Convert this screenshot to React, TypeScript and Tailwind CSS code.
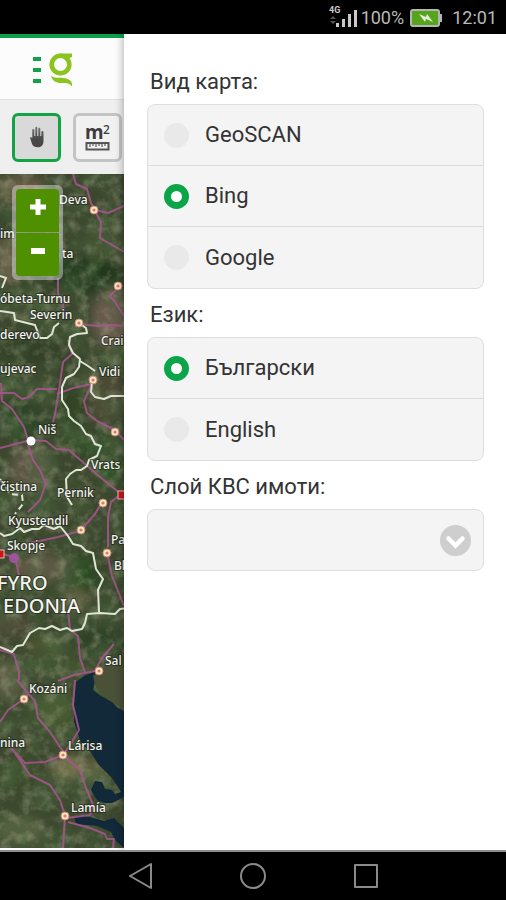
import React, { useState } from 'react';

interface MapLabel {
  text: string;
  x: number;
  y: number;
  size?: number;
}

const borders = [
  'M0 276l6 2-4 10M0 311l14 2 1 7 20 5 5 13 7 0 5-4 2-7 5-4',
  'M79 323l7 5 1 5-10 1-7 3-1 8 4 8 7 6-1 8-5 7-8 4-4 9 0 13 6 9 1 7 5 5 7 5 5 8 5 2 4 8 6 2-4 10-8 4-2 6-6 4-5 0-6 4-4 5 1 18 5 8',
  'M80 361l8 5 7 5M92 382l-1 10 4 5 9 2 7-3 13 0',
  'M0 533l4 3 8-2 8-6 4 4 8-3 7 0 5-4 10 4 6-3 8 10 5 8 8 2 5 5 7 2 3 16 7 10-5 11 1 22',
  'M0 647l12 5 5-6 6-1 7-12 9-5 6 1 7-3 8 4 7-2 5 3 10-2 3-6 2-9 13-1 15 1 5-5 7-1',
];

const roads = [
  'M73 174l3 10 11 5 4 14 4 7 13 3 16-7M95 211l6 11-1 16 24 14',
  'M58 278l0 16 5 10 1 14M79 324l18 2 13-1 14 1M118 288l-8 8 5 6 9 14',
  'M68 340l4 14-9 8-4 28-4 24-2 8',
  'M0 393l14 0 8 6 7-2 8-8 20 0M57 394l16-6 19-4-8 17 3 12 10 8 18 9 9 10',
  'M1 383l1 18 10 8 12 18 4 13 3 1M0 448l31-8 15 1 10 8 13 1 16 14 15 13 21 17',
  'M28 445l5 15 7 10 6 14-6 16-12 12M121 494l-10 8-3 15 0 30M102 502l-7 12-15 17-22 6-28 6',
  'M2 554l13 3 4 18M107 552l5 24 12 30M68 610l2 20 8 6 2 22 5 14',
  'M58 681l16-6 21-4 7-13 12-14M0 650l14 4 5 18 0 8',
  'M0 722l8-12 16-11 8-9M17 680l10 12 8 9 3 17 12 14 12 18 2 5',
  'M11 748l14 15 20-1 18-7M13 750l17 25 20 10 10 15 5 16-2 32',
  'M75 680l-2 25 6 25-9 15-7 10 17 15 6 18 7 17-3 10-23 3M68 822l22 6 15 6 2 5 7 0-1 9',
];

const towns = [
  [94, 210], [118, 286], [79, 323], [93, 380], [115, 432], [103, 503],
  [81, 530], [107, 553], [99, 671], [24, 699], [63, 755], [65, 816],
];

const labels: MapLabel[] = [
  { text: 'Deva', x: 59, y: 204 },
  { text: 'im', x: 0, y: 238 },
  { text: 'ta', x: 62, y: 258 },
  { text: 'óbeta-Turnu', x: 0, y: 303 },
  { text: 'Severin', x: 30, y: 319 },
  { text: 'derevo', x: 0, y: 339 },
  { text: 'Crai', x: 101, y: 345 },
  { text: 'ujevac', x: 0, y: 373 },
  { text: 'Vidi', x: 99, y: 376 },
  { text: 'Niš', x: 38, y: 434 },
  { text: 'Vrats', x: 91, y: 469 },
  { text: 'čistina', x: 0, y: 491 },
  { text: 'Pernik', x: 57, y: 497 },
  { text: 'Kyustendil', x: 8, y: 525 },
  { text: 'Skopje', x: 7, y: 550 },
  { text: 'Pa', x: 111, y: 544 },
  { text: 'Bl', x: 114, y: 570 },
  { text: 'FYRO', x: -3, y: 590, size: 20 },
  { text: 'EDONIA', x: 3, y: 613, size: 20 },
  { text: 'Sal', x: 105, y: 665 },
  { text: 'Kozáni', x: 29, y: 693 },
  { text: 'nina', x: 0, y: 747 },
  { text: 'Lárisa', x: 68, y: 750 },
  { text: 'Lamía', x: 71, y: 812 },
];

const patches = [
  [20, 190, 26, 14, '#6b5a45'], [8, 260, 12, 24, '#6a6048'], [105, 240, 18, 22, '#435033'],
  [85, 275, 36, 18, '#22371c'], [112, 320, 20, 30, '#665a4b'], [40, 350, 40, 14, '#333f25'],
  [100, 395, 26, 26, '#4b4c36'], [20, 420, 24, 20, '#2d4425'], [70, 410, 18, 32, '#304426'],
  [30, 470, 20, 24, '#5d5944'], [90, 445, 20, 12, '#26401f'], [112, 470, 14, 10, '#2f5427'],
  [40, 568, 28, 14, '#5f5844'], [85, 575, 14, 18, '#2a4820'], [75, 600, 14, 10, '#6a6046'],
  [12, 625, 22, 10, '#4e4a34'], [45, 645, 20, 8, '#4b5633'], [95, 640, 22, 14, '#2e4325'],
  [60, 668, 26, 14, '#425532'], [8, 680, 16, 20, '#5e5842'], [55, 710, 18, 20, '#47592f'],
  [20, 775, 18, 24, '#3a482a'], [70, 768, 20, 12, '#75704e'], [40, 800, 26, 14, '#3b4a2d'],
  [20, 830, 26, 14, '#546040'], [95, 770, 14, 12, '#5f6141'],
] as const;

const MapView = () => (
  <svg
    className="absolute inset-0 h-full w-full"
    viewBox="0 174 124 674"
    preserveAspectRatio="xMinYMin slice"
    role="img"
    aria-label="Bing"
  >
    <defs>
      <filter id="grain" x="0" y="0" width="1" height="1">
        <feTurbulence type="fractalNoise" baseFrequency="0.09" numOctaves="4" seed="8" />
        <feColorMatrix values="0 0 0 0 0.52  0 0 0 0 0.5  0 0 0 0 0.36  1.8 0 0 0 -0.8" />
      </filter>
      <filter id="shade" x="0" y="0" width="1" height="1">
        <feTurbulence type="fractalNoise" baseFrequency="0.035" numOctaves="4" seed="21" />
        <feColorMatrix values="0 0 0 0 0.07  0 0 0 0 0.14  0 0 0 0 0.05  0 2.4 0 0 -0.95" />
      </filter>
      <filter id="soft">
        <feGaussianBlur stdDeviation="5" />
      </filter>
    </defs>

    <rect y="174" width="124" height="674" fill="#3c482e" />
    <g filter="url(#soft)">
      {patches.map(([cx, cy, rx, ry, fill], index) => (
        <ellipse key={index} cx={cx} cy={cy} rx={rx} ry={ry} fill={fill} />
      ))}
    </g>
    <rect y="174" width="124" height="674" filter="url(#shade)" opacity="0.6" />
    <rect y="174" width="124" height="674" filter="url(#grain)" opacity="0.45" />

    <g fill="#12293a">
      <path d="M76 682l8-6 10-4 6 4-5 5-2 9 8 6 11 6 6 6 6 3v86l-6-10-6-9-14-14-8-13-9-8-4-12-3-10 0-17z" />
      <path d="M95 781l7 1 3 7 7 1 3 4 9-3v6l-12 6-8 0-7-3-6-10z" />
      <path d="M74 816l16 1 14 4 10-3 10 10v20l-9-8-4-8-14-6-21-2z" />
    </g>
    <path d="M93 676l13-12 18 2v42l-12-6-16-14z" fill="#4b5137" />

    <g fill="none" stroke="#a8568f" strokeWidth="2" strokeLinejoin="round" strokeOpacity="0.85">
      {roads.map((d) => (
        <path key={d} d={d} />
      ))}
    </g>
    <circle cx="14" cy="558" r="5" fill="#a950ad" opacity="0.8" />
    <g fill="none" stroke="#dfe6d4" strokeWidth="2" strokeLinejoin="round">
      {borders.map((d) => (
        <path key={d} d={d} />
      ))}
      <path d="M0 479l10 15 12 1 1 9-8 10" strokeDasharray="6 4" />
    </g>

    {towns.map(([cx, cy]) => (
      <g key={`${cx}-${cy}`}>
        <circle cx={cx} cy={cy} r="4" fill="#fbe3c6" stroke="#c98a78" strokeWidth="1" />
        <circle cx={cx} cy={cy} r="1.6" fill="#d78063" />
      </g>
    ))}
    <circle cx="31" cy="441" r="4.5" fill="#fff" />
    <rect x="118" y="491" width="8" height="8" fill="#c9151b" stroke="#eab9b4" />
    <rect x="-4" y="550" width="8" height="8" fill="#c9151b" stroke="#eab9b4" />

    <g
      fill="#f4f4f0"
      stroke="#20251b"
      strokeWidth="2"
      strokeOpacity="0.65"
      paintOrder="stroke"
      fontFamily="'Noto Sans', 'Open Sans', sans-serif"
      fontWeight="500"
    >
      {labels.map(({ text, x, y, size = 12 }) => (
        <text key={text} x={x} y={y} fontSize={size}>
          {text}
        </text>
      ))}
    </g>
  </svg>
);

const StatusBar = () => (
  <div className="flex h-[34px] shrink-0 items-center justify-end bg-black pt-0.5 pr-[9px] text-lg leading-6 text-[#b9b9b9]">
    <svg className="mr-1 h-[26px] w-[28px] overflow-visible" viewBox="0 0 28 26" fill="#c9c9c9" aria-hidden="true">
      <text x="0" y="8" fontSize="9" fontWeight="700">4G</text>
      <path d="M4 11l3 3H1zM4 19l-3-3h6z" fill="#555" />
      <path d="M7 18h3v4H7zM13 14h3v8h-3zM19 9h3v13h-3zM25 5h3v17h-3z" />
    </svg>
    <span>100%</span>
    <svg className="mr-[9px] ml-[6px] h-[18px] w-[33px]" viewBox="0 0 33 18" aria-hidden="true">
      <rect x="1" y="1" width="28" height="16" rx="2" fill="#56a31c" stroke="#b5b5b5" strokeWidth="2" />
      <path d="M30 5h2v8h-2z" fill="#b5b5b5" />
      <path d="M9 5l7 3 1-3 6 8-7-3-1 3z" fill="#e3efd9" />
    </svg>
    <span>12:01</span>
  </div>
);

const Logo = () => (
  <svg className="h-[36px] w-[42px]" viewBox="0 0 42 36" aria-hidden="true">
    <path d="M1 6h8v4H1zM1 17h8v4H1zM1 28h8v4H1z" fill="#12a04b" />
    <circle cx="28.5" cy="13.5" r="8.8" fill="none" stroke="#8bc31f" strokeWidth="4.6" />
    <path d="M27 2.500h13v3.500l-5 2z" fill="#8bc31f" />
    <path d="M19 24.500c3 3 7 2 12 2.500 6 .5 10 3 9 8.500-3-4-7-3.500-11-3.500-5 0-9-2-10-7.500z" fill="#8bc31f" />
  </svg>
);

const HandIcon = () => (
  <svg className="h-[22px] w-[16px]" viewBox="0 0 16 22" aria-hidden="true">
    <defs>
      <linearGradient id="hand" x1="0" y1="0" x2="0" y2="1">
        <stop offset="0" stopColor="#777" />
        <stop offset="0.6" stopColor="#484848" />
      </linearGradient>
    </defs>
    <path
      d="M1 11.500c1-.6 1.800-.2 2.300.7V4.200c0-1.500 2-1.500 2 0V10h1V2c0-1.600 2-1.600 2 0v8h1V2.800c0-1.500 2-1.500 2 0V10h1V6c0-1.500 2.200-1.500 2.200 0v9c0 4-2.100 6.300-5.800 6.300-3 0-4.600-1-5.700-3.300z"
      fill="url(#hand)"
    />
  </svg>
);

const AreaIcon = () => (
  <svg className="h-[28px] w-[26px] overflow-visible" viewBox="0 0 26 28" fill="#3c3c3c" aria-hidden="true">
    <text x="0" y="16" fontSize="19" fontWeight="700" fontFamily="'Noto Sans', sans-serif">m</text>
    <text x="18" y="11" fontSize="12" fontWeight="500" fontFamily="'Noto Sans', sans-serif">2</text>
    <rect x="1.500" y="20" width="22" height="6.500" fill="#f2f2f2" stroke="#555" strokeWidth="2" />
    <path d="M5 20v4M8 20v3M11 20v4M14 20v3M17 20v4M20 20v3" stroke="#555" strokeWidth="1.200" />
  </svg>
);

interface RadioGroupProps {
  title: string;
  name: string;
  options: string[];
  value: string;
  onChange: (value: string) => void;
}

const RadioGroup: React.FC<RadioGroupProps> = ({ title, name, options, value, onChange }) => (
  <fieldset>
    <legend className="flex h-12 items-center pt-1 pl-[3px]">{title}</legend>
    <div className="divide-y divide-[#dedede] rounded-lg border border-[#dedede] bg-[#f4f4f4]">
      {options.map((option) => (
        <label key={option} className="flex h-[61px] cursor-pointer items-center pl-4">
          <input
            type="radio"
            name={name}
            value={option}
            checked={value === option}
            onChange={() => onChange(option)}
            className="mr-4 size-[25px] appearance-none rounded-full bg-[#e9e9e9] checked:border-[7px] checked:border-[#0aa548] checked:bg-white"
          />
          {option}
        </label>
      ))}
    </div>
  </fieldset>
);

const App = () => {
  const [mapType, setMapType] = useState('Bing');
  const [language, setLanguage] = useState('Български');

  return (
    <div className="flex min-h-screen flex-col bg-white font-['Roboto','Noto_Sans',sans-serif]">
      <StatusBar />

      <main className="flex flex-1 overflow-hidden">
        <section className="flex w-[124px] shrink-0 flex-col">
          <header className="flex h-[65px] items-center border-t-4 border-[#0da04a] bg-[#fcfcfc] pl-8">
            <Logo />
          </header>
          <div className="flex h-[75px] items-center gap-3 border-t border-[#e0e0e0] bg-[#efefef] pl-3">
            <button
              type="button"
              aria-label="Pan"
              className="flex size-[49px] shrink-0 items-center justify-center rounded-md border-3 border-[#12a345] bg-[#d9d9d9]"
            >
              <HandIcon />
            </button>
            <button
              type="button"
              aria-label="Area"
              className="flex size-[49px] shrink-0 items-center justify-center rounded-md border-3 border-[#c4c4c4] bg-[#f1f1f1]"
            >
              <AreaIcon />
            </button>
          </div>
          <div className="relative mb-0.5 flex-1 overflow-hidden">
            <MapView />
            <div className="absolute top-[11px] left-3 flex flex-col gap-px rounded-md bg-white/40 p-1">
              <button type="button" aria-label="+" className="flex h-[43px] w-[43px] items-center justify-center rounded-t bg-[#4f9000] pb-2">
                <svg className="size-4" viewBox="0 0 16 16" fill="none" stroke="#fff" strokeWidth="5" aria-hidden="true">
                  <path d="M8 0v16M0 8h16" />
                </svg>
              </button>
              <button type="button" aria-label="-" className="flex h-[43px] w-[43px] items-center justify-center rounded-b bg-[#4f9000] pb-2">
                <svg className="size-4" viewBox="0 0 16 16" fill="none" stroke="#fff" strokeWidth="6" aria-hidden="true">
                  <path d="M1 8h14" />
                </svg>
              </button>
            </div>
          </div>
        </section>

        <aside className="relative flex-1 bg-white pt-[22px] pr-[22px] pl-[23px] text-[22px] leading-7 text-[#333] shadow-[-1px_0_8px_rgba(0,0,0,0.3)]">
          <RadioGroup
            title="Вид карта:"
            name="map-type"
            options={['GeoSCAN', 'Bing', 'Google']}
            value={mapType}
            onChange={setMapType}
          />
          <RadioGroup
            title="Език:"
            name="language"
            options={['Български', 'English']}
            value={language}
            onChange={setLanguage}
          />
          <label htmlFor="layer" className="flex h-12 items-center pt-1 pl-[3px]">
            Слой КВС имоти:
          </label>
          <div className="relative">
            <select
              id="layer"
              className="block h-[62px] w-full appearance-none rounded-lg border border-[#dedede] bg-[#f4f4f4] pl-4"
            >
              <option value="" />
            </select>
            <svg
              className="pointer-events-none absolute top-4 right-[13px] size-[31px]"
              viewBox="0 0 31 31"
              fill="none"
              aria-hidden="true"
            >
              <circle cx="15.500" cy="15.500" r="15.500" fill="#cecece" />
              <path d="M8.500 13.500l7 7 7-7" stroke="#fff" strokeWidth="4.500" strokeLinecap="round" />
            </svg>
          </div>
        </aside>
      </main>

      <nav className="flex h-[50px] shrink-0 items-center justify-center gap-[87px] border-t-2 border-[#8c8c8c] bg-black">
        <button type="button" aria-label="Back">
          <svg className="size-[26px]" viewBox="0 0 26 26" fill="none" stroke="#8a8a8a" strokeWidth="2" strokeLinejoin="round" aria-hidden="true">
            <path d="M3 13l21-12v24z" />
          </svg>
        </button>
        <button type="button" aria-label="Home">
          <svg className="size-[26px]" viewBox="0 0 26 26" fill="none" stroke="#8a8a8a" strokeWidth="2" aria-hidden="true">
            <circle cx="13" cy="13" r="12" />
          </svg>
        </button>
        <button type="button" aria-label="Recents">
          <svg className="size-[26px]" viewBox="0 0 26 26" fill="none" stroke="#8a8a8a" strokeWidth="2" strokeLinejoin="round" aria-hidden="true">
            <rect x="2" y="2" width="22" height="22" />
          </svg>
        </button>
      </nav>
    </div>
  );
};

export default App;
